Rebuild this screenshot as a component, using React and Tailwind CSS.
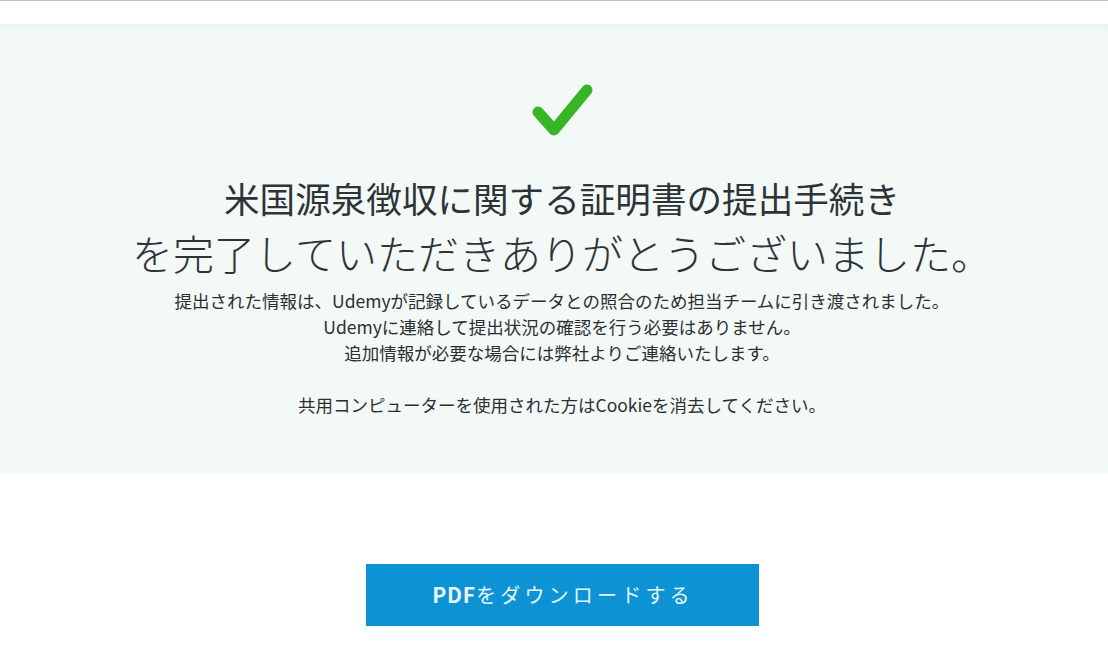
export default function App() {
  const jp = { fontFamily: '"Noto Sans CJK JP", "Noto Sans", sans-serif' }

  return (
    <div className="min-h-[645px] bg-white text-[#2e3338]" style={jp}>
      <div className="border-t border-[#c2c2c2]" />
      <div className="h-[23px] bg-white" />

      {/* confirmation panel */}
      <div className="bg-[#f3f9f7] shadow-[inset_0_6px_6px_-4px_rgba(0,0,0,0.05)] pl-[16px] pt-[54px] pb-[56px]">
        <div className="flex justify-center">
          <svg width="64" height="64" viewBox="0 0 64 64">
            <path d="M8 34 L24 52 L57 12" fill="none" stroke="#38b524" strokeWidth="11" strokeLinecap="round" strokeLinejoin="round" />
          </svg>
        </div>

        <h1 className="mt-[28px] text-center">
          <span className="block text-[35.6px] leading-[55px] font-normal">米国源泉徴収に関する証明書の提出手続き</span>
          <span className="block text-[41px] leading-[55px] font-light">を完了していただきありがとうございました。</span>
        </h1>

        <div className="mt-[8px] text-center text-[17.5px] leading-[26px] text-[#2b2f33]">
          <p>提出された情報は、Udemyが記録しているデータとの照合のため担当チームに引き渡されました。</p>
          <p>Udemyに連絡して提出状況の確認を行う必要はありません。</p>
          <p>追加情報が必要な場合には弊社よりご連絡いたします。</p>
          <p className="mt-[26px]">共用コンピューターを使用された方はCookieを消去してください。</p>
        </div>
      </div>

      {/* download */}
      <div className="flex justify-center pl-[16px] pt-[90px]">
        <button className="w-[393px] h-[62px] bg-[#0d93d3] text-[#e6f7ff] text-[20px] pl-[2px]">
          <span className="font-bold text-[21px] tracking-[0.04em]">PDF</span>
          <span className="tracking-[0.21em]">をダウンロードする</span>
        </button>
      </div>
    </div>
  )
}
